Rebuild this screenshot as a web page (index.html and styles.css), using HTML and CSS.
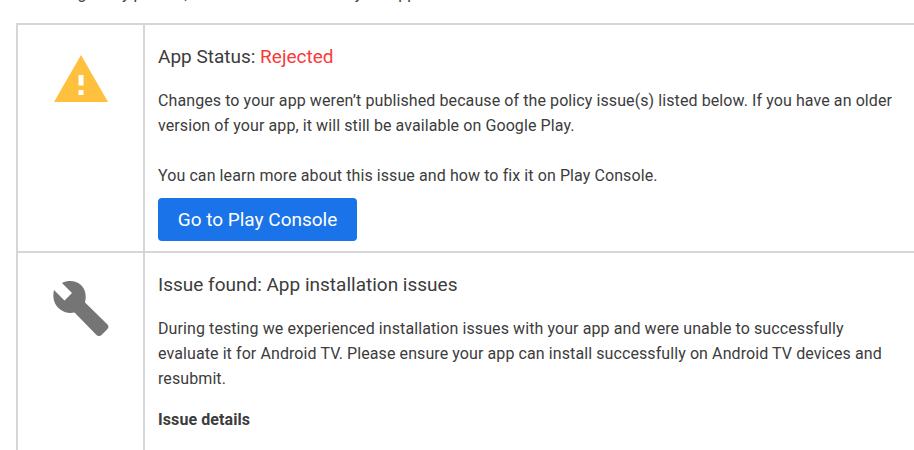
FILE: index.html
```html
<!DOCTYPE html>
<html lang="en">
<head>
<meta charset="utf-8">
<title>App Status</title>
<link rel="stylesheet" href="styles.css">
</head>
<body>
<p class="intro">Following many passes, we have reviewed how your app</p>
<table class="report">
<tr>
<td class="icon-cell">
<svg class="warn" width="56" height="48" viewBox="0 0 56 48"><path fill="#ffc03d" d="M28 0 55 47H1z"/><path fill="#fff" d="M25.500 20h5v10.500h-5zM25.500 35h5v5h-5z"/></svg>
</td>
<td class="body-cell">
<h2 class="heading">App Status: <span class="rejected">Rejected</span></h2>
<p class="para">Changes to your app weren’t published because of the policy issue(s) listed below. If you have an older version of your app, it will still be available on Google Play.</p>
<p class="para para-gap">You can learn more about this issue and how to fix it on Play Console.</p>
<a class="button" href="#">Go to Play Console</a>
</td>
</tr>
<tr>
<td class="icon-cell">
<svg class="wrench" width="57" height="57" viewBox="0 0 57 57"><path fill="#757575" d="M10 3 20 13 12.500 20.500 2 10C0 18 2.500 26 9 30c4 3 9 3.500 13.500 2.500L44 54.500c2 2 4 2 6 0l5-5c2-2 2-3.500 0-5.500L33 22.500C34.500 17 34 10 29 5 24 .5 16 0 10 3z"/></svg>
</td>
<td class="body-cell body-cell-last">
<h2 class="heading">Issue found: App installation issues</h2>
<p class="para">During testing we experienced installation issues with your app and were unable to successfully evaluate it for Android TV. Please ensure your app can install successfully on Android TV devices and resubmit.</p>
<p class="para details"><strong>Issue details</strong></p>
</td>
</tr>
</table>
</body>
</html>
```
FILE: styles.css
```css
html, body {
  margin: 0;
  height: 450px;
  overflow: hidden;
  background: #fff;
}
body {
  font-family: Roboto, sans-serif;
  color: #3c3c3c;
  font-size: 16px;
  line-height: 25px;
}
.intro {
  margin: -19px 0 0 18px;
  height: 42px;
  white-space: nowrap;
}
.report {
  margin-left: 16px;
  width: 898px;
  border-collapse: separate;
  border-spacing: 0;
  table-layout: fixed;
  border-top: 2px solid #d6d6d6;
  border-left: 2px solid #d6d6d6;
}
.report td {
  vertical-align: top;
}
.report tr + tr td {
  border-top: 2px solid #d6d6d6;
}
.icon-cell {
  width: 125px;
  padding: 0;
  border-right: 2px solid #d6d6d6;
}
.warn {
  display: block;
  margin: 30px 0 0 35px;
}
.wrench {
  display: block;
  margin: 27px 0 0 34px;
}
.body-cell {
  padding: 17px 16px 10px 13px;
}
.body-cell-last {
  padding-bottom: 18px;
}
.heading {
  margin: 0 0 16px;
  font-size: 19px;
  font-weight: 400;
  line-height: 30px;
}
.rejected {
  color: #f93a3a;
}
.para {
  margin: 0;
  letter-spacing: 0.09px;
}
.para-gap {
  margin-top: 25px;
}
.details {
  margin-top: 16px;
}
.button {
  display: block;
  margin-top: 10px;
  width: 199px;
  height: 43px;
  border-radius: 4px;
  background: #1a73e8;
  color: #fff;
  font-size: 19px;
  line-height: 43px;
  text-align: center;
  text-decoration: none;
}
```
